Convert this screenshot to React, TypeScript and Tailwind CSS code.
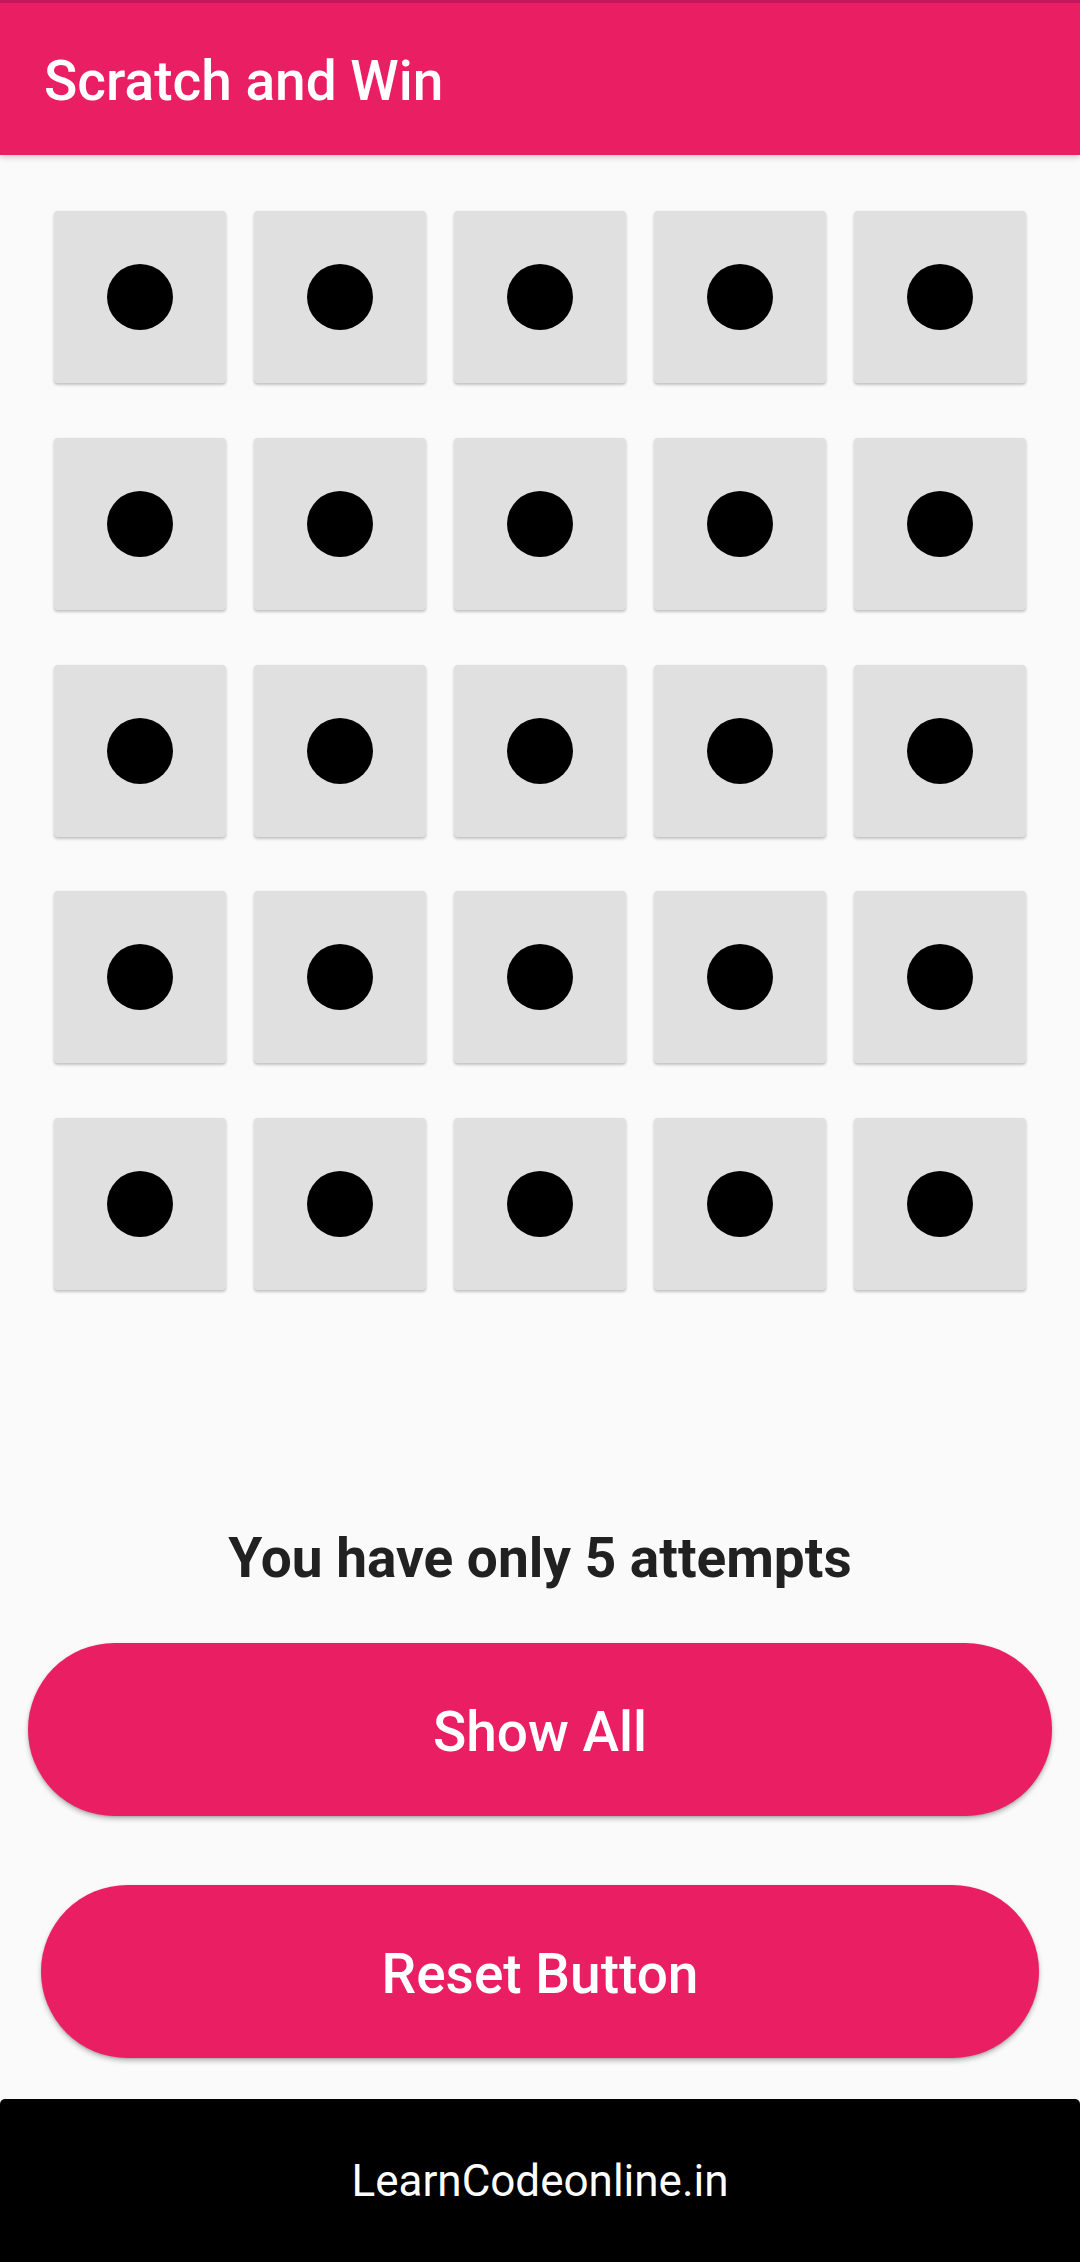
import React from "react";

export default function App() {
  const cells = Array.from({ length: 25 }, (_, i) => i);
  return (
    <div className="min-h-[2262px] w-[1080px] bg-[#fafafa] font-['Roboto',sans-serif] flex flex-col">
      <div className="relative z-10 h-[155px] bg-[#e91e63] shadow-[0_2px_6px_rgba(0,0,0,0.22)] flex flex-col">
        <div className="h-[3px] bg-[#c2185b]" />
        <div className="pl-[44px] pt-[46px] text-[55px] leading-[64px] font-medium text-white">
          Scratch and Win
        </div>
      </div>

      <div className="mt-[56px] px-[40px] grid grid-cols-5 gap-y-[54.75px]">
        {cells.map((i) => (
          <div key={i} className="flex justify-center">
            <div className="w-[172px] h-[172px] rounded-[4px] bg-[#e0e0e0] shadow-[0_2px_3px_rgba(0,0,0,0.22),0_0_2px_rgba(0,0,0,0.06)] flex items-center justify-center">
              <div className="w-[66px] h-[66px] rounded-full bg-black" />
            </div>
          </div>
        ))}
      </div>

      <div className="mt-[236px] text-center text-[55px] leading-[64px] font-bold text-[#212121]">
        You have only 5 attempts
      </div>

      <button className="mt-[53px] mx-[28px] h-[173px] rounded-full bg-[#e91e63] shadow-[0_3px_5px_rgba(0,0,0,0.25),0_1px_2px_rgba(0,0,0,0.12)] flex items-center justify-center pt-[5px] text-white text-[55px] leading-[64px] font-medium">
        Show All
      </button>

      <button className="mt-[69px] mx-[41px] h-[173px] rounded-full bg-[#e91e63] shadow-[0_3px_5px_rgba(0,0,0,0.25),0_1px_2px_rgba(0,0,0,0.12)] flex items-center justify-center pt-[5px] text-white text-[55px] leading-[64px] font-medium">
        Reset Button
      </button>

      <div className="mt-[41px] h-[163px] bg-black rounded-t-[5px] flex items-center justify-center text-white text-[44px] leading-[52px]">
        LearnCodeonline.in
      </div>
    </div>
  );
}
